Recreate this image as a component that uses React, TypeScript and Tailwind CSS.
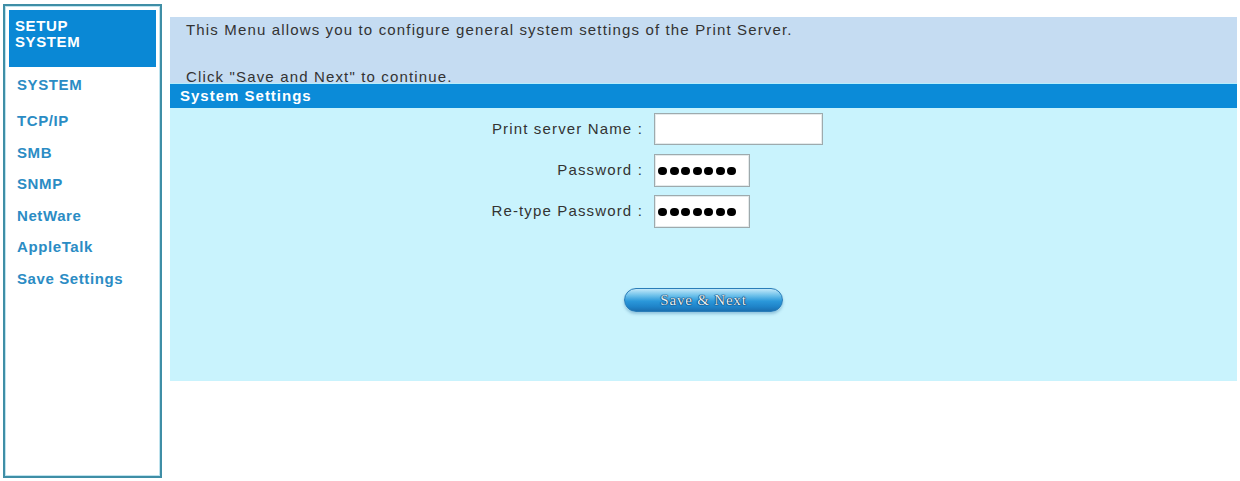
const menu = ["TCP/IP", "SMB", "SNMP", "NetWare", "AppleTalk", "Save Settings"];

function Dots() {
  return (
    <div className="flex items-center gap-[2.5px] pl-[3px]">
      {[0, 1, 2, 3, 4, 5, 6].map((i) => (
        <span key={i} className="block w-[9px] h-[8px] rounded-full bg-black" />
      ))}
    </div>
  );
}

function Row({ label, children }: { label: string; children: React.ReactNode }) {
  return (
    <div className="flex items-center h-[33px]">
      <div className="w-[475px] text-right pr-[2px] whitespace-nowrap">{label}</div>
      <div className="ml-[9px] h-full">{children}</div>
    </div>
  );
}

export default function App() {
  return (
    <div className="w-[1240px] h-[481px] bg-white flex font-['Liberation_Sans',Arial,sans-serif] overflow-hidden">
      <aside className="ml-[3px] mt-[4px] w-[159px] h-[474px] border-2 border-[#3f8ea6] shadow-[inset_0_0_0_1px_#bfe3ee] p-[4px] flex flex-col">
        <div className="h-[57px] bg-[#0a88d5] pl-[6px] pt-[8px] text-white font-bold text-[15px] leading-[16px] tracking-[0.6px]">
          SETUP
          <br />
          SYSTEM
        </div>
        <ul className="pl-[8px] mt-[9px] text-[15px] leading-[18px] font-bold tracking-[0.6px] text-[#2b8cc4]">
          <li className="mb-[18px]">SYSTEM</li>
          {menu.map((m) => (
            <li key={m} className="mb-[13.5px]">
              {m}
            </li>
          ))}
        </ul>
      </aside>

      <main className="ml-[8px] mt-[17px] w-[1067px] flex flex-col text-[15px] tracking-[1.15px] text-[#333]">
        <div className="h-[66px] bg-[#c5dcf2] pl-[16px] pt-[5px] leading-[16px]">
          <p>This Menu allows you to configure general system settings of the Print Server.</p>
          <p className="mt-[31px]">Click "Save and Next" to continue.</p>
        </div>
        <div className="h-[1px] bg-[#b6edfb]" />
        <div className="h-[24px] bg-[#0b8bd8] flex items-center pl-[10px] text-white font-bold tracking-[1px]">
          System Settings
        </div>
        <div className="h-[273px] bg-[#c9f3fd] pt-[5px] flex flex-col">
          <div className="flex flex-col gap-[8px]">
            <Row label="Print server Name :">
              <div className="w-[169px] h-[32px] bg-white border border-[#9eaaad] shadow-[inset_0_0_0_1px_#e4eaeb]" />
            </Row>
            <Row label="Password :">
              <div className="w-[96px] h-[33px] bg-white border border-[#9eaaad] shadow-[inset_0_0_0_1px_#e4eaeb] flex items-center">
                <Dots />
              </div>
            </Row>
            <Row label="Re-type Password :">
              <div className="w-[96px] h-[33px] bg-white border border-[#9eaaad] shadow-[inset_0_0_0_1px_#e4eaeb] flex items-center">
                <Dots />
              </div>
            </Row>
          </div>
          <button className="mx-auto mt-[60px] w-[159px] h-[24px] rounded-full border border-[#2a7db8] bg-[linear-gradient(to_bottom,#c2e8f9_0%,#6cc0ea_30%,#2b98da_55%,#1f84c9_80%,#1a6fb0_100%)] shadow-[0_2px_3px_rgba(40,110,160,0.35)] font-['Liberation_Serif',serif] text-[15px] leading-[22px] tracking-[0.8px] text-[#e4eef3] [text-shadow:0_0_1px_#0b3d6b,0_0_1px_#0b3d6b,0_0_1px_#0b3d6b,0_0_1px_#0b3d6b]">
            Save &amp; Next
          </button>
        </div>
      </main>
    </div>
  );
}
